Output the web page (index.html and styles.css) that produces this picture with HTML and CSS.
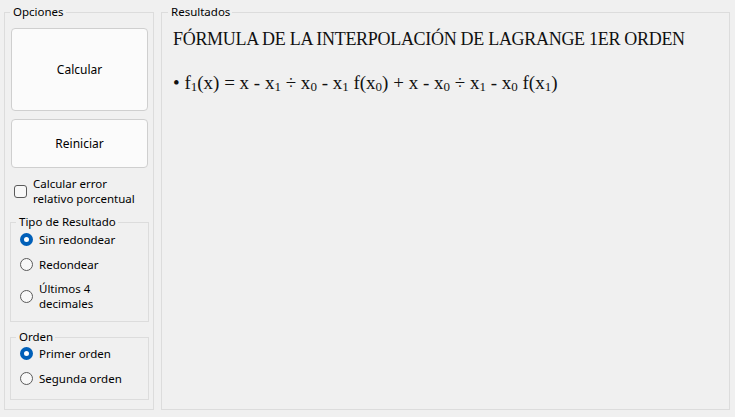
FILE: index.html
```html
<!DOCTYPE html>
<html lang="es">
<head>
    <meta charset="UTF-8">
    <title>Interpolación de Lagrange</title>
    <link rel="stylesheet" href="styles.css">
</head>
<body>
    <div class="window">
        <fieldset class="panel options">
            <legend>Opciones</legend>
            <button class="btn btn-calc">Calcular</button>
            <button class="btn btn-reset">Reiniciar</button>
            <label class="check">
                <input type="checkbox">
                <span>Calcular error<br>relativo porcentual</span>
            </label>

            <fieldset class="group tipo">
                <legend>Tipo de Resultado</legend>
                <label class="opt"><input type="radio" name="tipo" checked><span>Sin redondear</span></label>
                <label class="opt"><input type="radio" name="tipo"><span>Redondear</span></label>
                <label class="opt opt-tall"><input type="radio" name="tipo"><span>Últimos 4<br>decimales</span></label>
            </fieldset>

            <fieldset class="group orden">
                <legend>Orden</legend>
                <label class="opt"><input type="radio" name="orden" checked><span>Primer orden</span></label>
                <label class="opt"><input type="radio" name="orden"><span>Segunda orden</span></label>
            </fieldset>
        </fieldset>

        <fieldset class="panel results">
            <legend>Resultados</legend>
            <div class="output">
                <h2 class="title">FÓRMULA DE LA INTERPOLACIÓN DE LAGRANGE 1ER ORDEN</h2>
                <p class="formula">• f<sub>1</sub>(x) = x - x<sub>1</sub> ÷ x<sub>0</sub> - x<sub>1</sub> f(x<sub>0</sub>) + x - x<sub>0</sub> ÷ x<sub>1</sub> - x<sub>0</sub> f(x<sub>1</sub>)</p>
            </div>
        </fieldset>
    </div>
</body>
</html>
```

FILE: styles.css
```css
body {
    margin: 0;
    background: #f0f0f0;
    font-family: "Noto Sans", sans-serif;
    font-size: 11.5px;
    color: #000;
}
.window {
    display: flex;
    gap: 7px;
    padding: 5px 0 0 4px;
}
fieldset {
    margin: 0;
    border: 1px solid #dcdcdc;
    min-width: 0;
    box-sizing: border-box;
}
legend {
    padding: 0 2px 0 3px;
    line-height: 14px;
}
.panel {
    height: 405px;
}
.options {
    width: 150px;
    padding: 9px 4px 0 5px;
    display: flex;
    flex-direction: column;
}
.results {
    width: 569px;
    padding: 0 0 0 6px;
}
.btn {
    margin: 0 1px;
    background: #fbfbfb;
    border: 1px solid #cfcfcf;
    border-radius: 4px;
    font-family: inherit;
    font-size: 12px;
    color: #000;
}
.btn-calc {
    height: 83px;
}
.btn-reset {
    height: 49px;
    margin-top: 8px;
}
.check {
    display: flex;
    align-items: center;
    gap: 6px;
    margin: 8px 0 0 4px;
    line-height: 15px;
}
.check input {
    appearance: none;
    margin: 0;
    width: 13px;
    height: 13px;
    border: 1px solid #5a5a5a;
    border-radius: 3px;
    background: #f8f8f8;
    flex: none;
}
.group {
    padding: 0 0 10px 5px;
}
.tipo {
    margin-top: 9px;
}
.orden {
    margin-top: 8px;
    padding-bottom: 11px;
}
.opt {
    display: flex;
    align-items: center;
    gap: 6px;
    height: 20px;
    margin-left: 4px;
    line-height: 15px;
}
.opt + .opt {
    margin-top: 5px;
}
.opt-tall {
    height: 30px;
}
.opt + .opt-tall {
    margin-top: 7px;
}
.orden .opt:first-of-type {
    margin-top: -1px;
}
.opt input {
    appearance: none;
    margin: 0;
    width: 13px;
    height: 13px;
    border: 1px solid #5a5a5a;
    border-radius: 50%;
    background: #f8f8f8;
    flex: none;
    box-sizing: border-box;
}
.opt input:checked {
    border: 4px solid #005fb8;
    background: #fff;
}
.output {
    margin-left: 5px;
}
.title {
    margin: 8px 0 0;
    font-family: "Liberation Serif", serif;
    font-weight: normal;
    font-size: 18px;
    letter-spacing: -0.3px;
    line-height: 24px;
    color: #111;
}
.formula {
    margin: 20px 0 0;
    font-family: "Liberation Serif", serif;
    font-size: 19px;
    line-height: 24px;
    color: #111;
}
.formula sub {
    font-size: 13px;
    vertical-align: -2px;
    line-height: 0;
}
```
